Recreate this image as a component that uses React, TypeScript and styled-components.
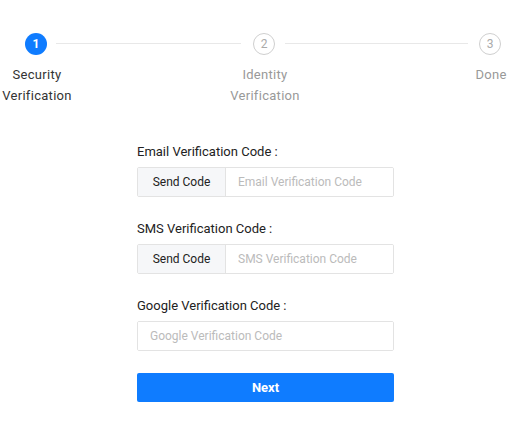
import styled, { createGlobalStyle } from "styled-components";

const GlobalStyle = createGlobalStyle`
    body {
        margin: 0;
        background: #ffffff;
        font-family: Roboto, "Liberation Sans", Arial, sans-serif;
    }
`;

const Page = styled.div`
    width: 519px;
    height: 437px;
    overflow: hidden;
`;

const Steps = styled.div`
    display: grid;
    grid-template-columns: 74px 153px 76px 160px 56px;
    grid-template-rows: 22px auto;
    row-gap: 9px;
    padding-top: 33px;
`;

const StepCircle = styled.div<{ $active?: boolean; $col: number; $shift?: number }>`
    grid-row: 1;
    grid-column: ${(p) => p.$col};
    justify-self: center;
    margin-left: ${(p) => (p.$shift || 0) * 2}px;
    width: 22px;
    height: 22px;
    box-sizing: border-box;
    border-radius: 50%;
    display: flex;
    align-items: center;
    justify-content: center;
    font-size: 12px;
    font-weight: ${(p) => (p.$active ? 700 : 400)};
    background: ${(p) => (p.$active ? "#0f7cff" : "#ffffff")};
    color: ${(p) => (p.$active ? "#ffffff" : "#aaaaaa")};
    border: ${(p) => (p.$active ? "none" : "1px solid #cfcfcf")};
`;

const StepLine = styled.div<{ $col: number; $ml: number; $mr: number }>`
    grid-row: 1;
    grid-column: ${(p) => p.$col};
    align-self: center;
    height: 1px;
    margin: -2px ${(p) => -p.$mr}px 0 ${(p) => -p.$ml}px;
    background: #e8e8e8;
`;

const StepLabel = styled.div<{ $active?: boolean; $col: number }>`
    grid-row: 2;
    grid-column: ${(p) => p.$col};
    justify-self: center;
    text-align: center;
    white-space: nowrap;
    font-size: 13px;
    line-height: 21px;
    letter-spacing: 0.3px;
    color: ${(p) => (p.$active ? "#333333" : "#999999")};
`;

const Form = styled.div`
    width: 257px;
    margin: 36px 0 0 137px;
    display: flex;
    flex-direction: column;
`;

const Field = styled.div`
    display: flex;
    flex-direction: column;
    margin-bottom: 22px;
`;

const Label = styled.div`
    font-size: 13px;
    line-height: 20px;
    color: #222222;
    margin-bottom: 5px;
`;

const InputGroup = styled.div`
    display: flex;
    height: 30px;
    box-sizing: border-box;
    border: 1px solid #e3e3e3;
    border-radius: 2px;
    overflow: hidden;
`;

const Addon = styled.div`
    width: 87px;
    flex: none;
    display: flex;
    align-items: center;
    justify-content: center;
    background: #f6f7f9;
    border-right: 1px solid #e3e3e3;
    font-size: 12px;
    color: #222222;
`;

const Input = styled.input`
    flex: 1;
    min-width: 0;
    border: none;
    outline: none;
    padding: 0 12px;
    font-family: inherit;
    font-size: 12px;
    color: #333333;
    background: #ffffff;
    &::placeholder {
        color: #bbbbbb;
    }
`;

const NextButton = styled.button`
    height: 29px;
    border: none;
    border-radius: 2px;
    background: #0f7cff;
    color: #ffffff;
    font-family: inherit;
    font-size: 13px;
    font-weight: 700;
    cursor: pointer;
`;

const App = () => {
    return (
        <Page>
            <GlobalStyle />
            <Steps>
                <StepCircle $active $col={1} $shift={-1}>1</StepCircle>
                <StepLine $col={2} $ml={18} $mr={14} />
                <StepCircle $col={3} $shift={-1}>2</StepCircle>
                <StepLine $col={4} $ml={18} $mr={5} />
                <StepCircle $col={5} $shift={-1}>3</StepCircle>
                <StepLabel $active $col={1}>Security<br />Verification</StepLabel>
                <StepLabel $col={3}>Identity<br />Verification</StepLabel>
                <StepLabel $col={5}>Done</StepLabel>
            </Steps>
            <Form>
                <Field>
                    <Label>Email Verification Code :</Label>
                    <InputGroup>
                        <Addon>Send Code</Addon>
                        <Input placeholder="Email Verification Code" />
                    </InputGroup>
                </Field>
                <Field>
                    <Label>SMS Verification Code :</Label>
                    <InputGroup>
                        <Addon>Send Code</Addon>
                        <Input placeholder="SMS Verification Code" />
                    </InputGroup>
                </Field>
                <Field>
                    <Label>Google Verification Code :</Label>
                    <InputGroup>
                        <Input placeholder="Google Verification Code" />
                    </InputGroup>
                </Field>
                <NextButton>Next</NextButton>
            </Form>
        </Page>
    );
};

export default App;
